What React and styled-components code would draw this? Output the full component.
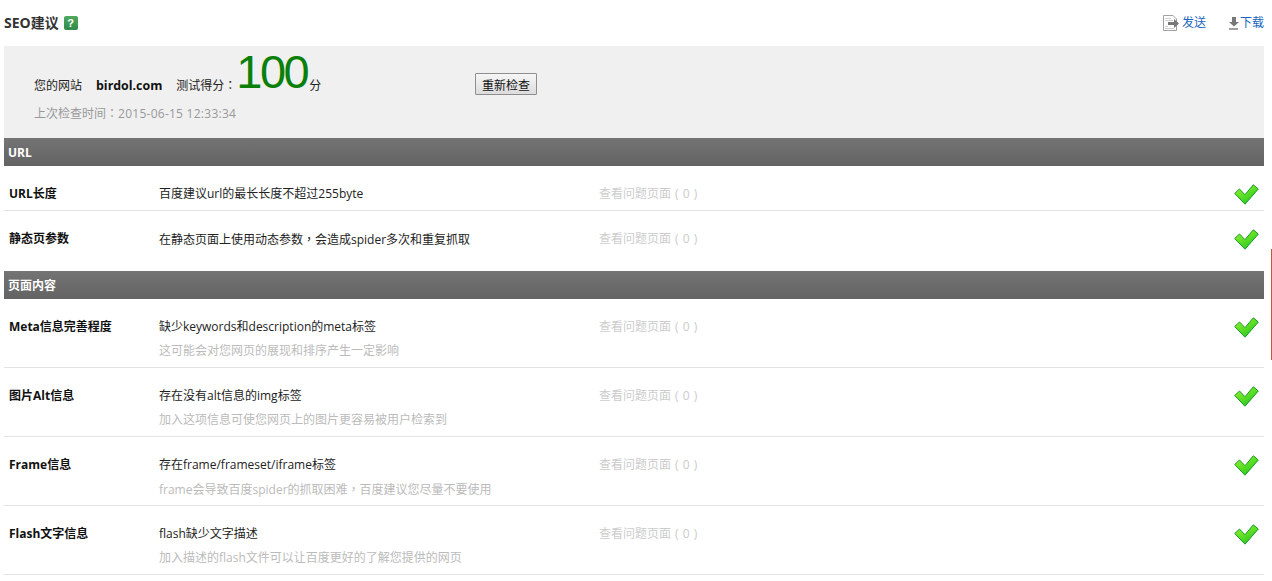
import React from "react";
import styled, { createGlobalStyle } from "styled-components";

const Global = createGlobalStyle`
  html, body { margin: 0; padding: 0; background: #fff; overflow: hidden; }
  body { font-family: "Open Sans", "Noto Sans CJK SC", sans-serif; font-size: 12px; color: #111; }
`;

const Page = styled.div`
  position: relative;
  width: 1272px;
  height: 581px;
  overflow: hidden;
  padding-left: 4px;
  box-sizing: border-box;
`;
const Content = styled.div`
  width: 1260px;
`;
const TitleBar = styled.header`
  height: 46px;
  display: flex;
  align-items: center;
  justify-content: space-between;
`;
const Title = styled.h1`
  margin: 0;
  display: flex;
  align-items: center;
  gap: 5px;
  font-size: 14px;
  font-weight: 700;
  color: #333;
  line-height: 46px;
`;
const HelpBadge = styled.span`
  width: 14px;
  height: 14px;
  border-radius: 2px;
  background: linear-gradient(#4ea85c, #2f8a4b);
  color: #fff;
  font-size: 11px;
  font-weight: 700;
  line-height: 14px;
  text-align: center;
  font-family: "Liberation Sans", sans-serif;
`;
const Actions = styled.div`
  display: flex;
  align-items: center;
  gap: 23px;
`;
const ActionLink = styled.a`
  display: flex;
  align-items: center;
  gap: ${p => p.$gap}px;
  color: #1a66bd;
  font-size: 12px;
  line-height: 16px;
`;
const Summary = styled.section`
  height: 92px;
  box-sizing: border-box;
  background: #f0f0f0;
  padding: 0 0 0 30px;
  position: relative;
`;
const SummaryLine = styled.div`
  height: 50px;
  display: flex;
  align-items: flex-end;
  color: #222;
  line-height: 18px;
`;
const Cell = styled.span`
  display: inline-block;
  padding-bottom: 1px;
`;
const Domain = styled(Cell)`
  font-weight: 700;
  font-size: 12.4px;
  color: #111;
  margin: 0 14px;
`;
const Score = styled.span`
  font-family: "Liberation Sans", sans-serif;
  font-size: 47px;
  line-height: 50px;
  letter-spacing: -2.5px;
  color: #0a800a;
  margin: 0 2px -1px 0;
  height: 50px;
`;
const Punct = styled.span`
  font-family: "Noto Sans CJK TC", sans-serif;
`;
const Recheck = styled.button`
  position: absolute;
  left: 471px;
  top: 27px;
  width: 62px;
  height: 22px;
  padding: 0;
  box-sizing: border-box;
  border: 1px solid #8e8e8e;
  border-radius: 1px;
  background: linear-gradient(#f6f6f6, #dcdcdc);
  font: 12px "Noto Sans CJK SC", sans-serif;
  color: #111;
`;
const LastCheck = styled.div`
  margin-top: 8px;
  color: #999;
  line-height: 18px;
`;
const Stamp = styled.span`
  letter-spacing: 0.26px;
`;
const SectionHead = styled.h2`
  margin: ${p => (p.$first ? 0 : "15px 0 0")};
  height: 28px;
  line-height: 29px;
  padding-left: 4px;
  background: linear-gradient(#747474, #636363);
  color: #fff;
  font-size: 12px;
  font-weight: 700;
`;
const Row = styled.div`
  display: grid;
  grid-template-columns: 150px 440px 1fr 30px;
  box-sizing: border-box;
  height: ${p => (p.$tall ? 69 : 45)}px;
  padding-left: 5px;
  border-bottom: ${p => (p.$last ? "0" : "1px solid #e3e3e3")};
`;
const Name = styled.div`
  font-weight: 700;
  color: #111;
  line-height: 18px;
  padding-top: 19px;
`;
const Info = styled.div`
  padding-top: 19px;
`;
const Desc = styled.div`
  line-height: 18px;
  color: #222;
`;
const Hint = styled.div`
  margin-top: 6px;
  line-height: 18px;
  color: #bbb;
`;
const Issue = styled.div`
  padding-top: 19px;
  line-height: 18px;
  color: #ccc;
  word-spacing: 1px;
`;
const CheckCell = styled.div`
  padding-top: 18px;
  display: flex;
  justify-content: flex-start;
`;
const Scroll = styled.div`
  position: absolute;
  right: 0;
  top: 249px;
  width: 1px;
  height: 111px;
  background: #c0583c;
`;

const Check = () => (
  <svg width="25" height="21" viewBox="0 0 25 21">
    <defs>
      <linearGradient id="chk" x1="0" y1="0" x2="0.7" y2="1">
        <stop offset="0" stopColor="#a4f03a" />
        <stop offset="0.6" stopColor="#55dc22" />
        <stop offset="1" stopColor="#27c02a" />
      </linearGradient>
    </defs>
    <path d="M0.7 9.5 L5.5 5 L11 10.7 L19.3 0.8 L24.3 5 L11 20.2 Z" fill="url(#chk)" stroke="#169a26" strokeWidth="1" strokeLinejoin="miter" />
  </svg>
);
const SendIcon = () => (
  <svg width="17" height="16" viewBox="0 0 17 16">
    <path d="M.5 .5H10L13.5 4V15.5H.5Z" fill="#fff" stroke="#a0a0a0" />
    <path d="M2 3.5h6M2 5.5h8M2 11.5h3M2 13.5h9" stroke="#ccc" />
    <path d="M5 7h6V4L16 8.5 11 13V10H5Z" fill="#777" />
  </svg>
);
const DownIcon = () => (
  <svg width="10" height="14" viewBox="0 0 10 14">
    <path d="M3 1h4v5h3L5 10.5 0 6h3Z" fill="#777" />
    <path d="M0 13h9" stroke="#777" strokeWidth="1.4" />
  </svg>
);

const Item = ({ name, desc, hint, last }) => (
  <Row $tall={!!hint} $last={last}>
    <Name>{name}</Name>
    <Info>
      <Desc>{desc}</Desc>
      {hint && <Hint>{hint}</Hint>}
    </Info>
    <Issue>查看问题页面 ( 0 )</Issue>
    <CheckCell><Check /></CheckCell>
  </Row>
);

export default function App() {
  return (
    <Page>
      <Global />
      <Content>
        <TitleBar>
          <Title>SEO建议<HelpBadge>?</HelpBadge></Title>
          <Actions>
            <ActionLink $gap={2}><SendIcon />发送</ActionLink>
            <ActionLink $gap={1}><DownIcon />下载</ActionLink>
          </Actions>
        </TitleBar>
        <Summary>
          <SummaryLine>
            <Cell>您的网站</Cell>
            <Domain>birdol.com</Domain>
            <Cell>测试得分<Punct>：</Punct></Cell>
            <Score>100</Score>
            <Cell>分</Cell>
          </SummaryLine>
          <LastCheck>上次检查时间<Punct>：</Punct><Stamp>2015-06-15 12:33:34</Stamp></LastCheck>
          <Recheck>重新检查</Recheck>
        </Summary>
        <SectionHead $first>URL</SectionHead>
        <Item name="URL长度" desc="百度建议url的最长长度不超过255byte" />
        <Item name="静态页参数" desc={<>在静态页面上使用动态参数<Punct>，</Punct>会造成spider多次和重复抓取</>} last />
        <SectionHead>页面内容</SectionHead>
        <Item name="Meta信息完善程度" desc="缺少keywords和description的meta标签" hint="这可能会对您网页的展现和排序产生一定影响" />
        <Item name="图片Alt信息" desc="存在没有alt信息的img标签" hint="加入这项信息可使您网页上的图片更容易被用户检索到" />
        <Item name="Frame信息" desc="存在frame/frameset/iframe标签" hint={<>frame会导致百度spider的抓取困难<Punct>，</Punct>百度建议您尽量不要使用</>} />
        <Item name="Flash文字信息" desc="flash缺少文字描述" hint="加入描述的flash文件可以让百度更好的了解您提供的网页" />
      </Content>
      <Scroll />
    </Page>
  );
}
